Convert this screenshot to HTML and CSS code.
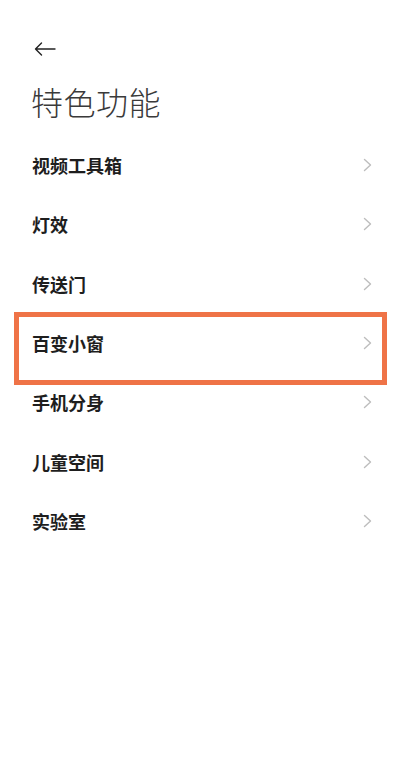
FILE: index.html
```html
<!DOCTYPE html>
<html lang="zh-CN">
<head>
<meta charset="utf-8">
<title>特色功能</title>
<link rel="stylesheet" href="styles.css">
</head>
<body>
<div class="page">
  <div class="topbar">
    <svg class="back" width="22" height="14" viewBox="0 0 22 14" fill="none" stroke="#222" stroke-width="1.4" stroke-linecap="round" stroke-linejoin="round">
      <path d="M21 7H1.5M7.5 1L1.5 7l6 6"/>
    </svg>
  </div>
  <h1 class="title">特色功能</h1>
  <ul class="list">
    <li class="item"><span class="label">视频工具箱</span><svg class="chev" width="9" height="14" viewBox="0 0 9 14" fill="none" stroke="#bdbdbd" stroke-width="1.4" stroke-linecap="round" stroke-linejoin="round"><path d="M1.5 1.5L7.5 7l-6 5.5"/></svg></li>
    <li class="item"><span class="label">灯效</span><svg class="chev" width="9" height="14" viewBox="0 0 9 14" fill="none" stroke="#bdbdbd" stroke-width="1.4" stroke-linecap="round" stroke-linejoin="round"><path d="M1.5 1.5L7.5 7l-6 5.5"/></svg></li>
    <li class="item"><span class="label">传送门</span><svg class="chev" width="9" height="14" viewBox="0 0 9 14" fill="none" stroke="#bdbdbd" stroke-width="1.4" stroke-linecap="round" stroke-linejoin="round"><path d="M1.5 1.5L7.5 7l-6 5.5"/></svg></li>
    <li class="item item-highlight"><span class="label">百变小窗</span><svg class="chev" width="9" height="14" viewBox="0 0 9 14" fill="none" stroke="#bdbdbd" stroke-width="1.4" stroke-linecap="round" stroke-linejoin="round"><path d="M1.5 1.5L7.5 7l-6 5.5"/></svg></li>
    <li class="item"><span class="label">手机分身</span><svg class="chev" width="9" height="14" viewBox="0 0 9 14" fill="none" stroke="#bdbdbd" stroke-width="1.4" stroke-linecap="round" stroke-linejoin="round"><path d="M1.5 1.5L7.5 7l-6 5.5"/></svg></li>
    <li class="item"><span class="label">儿童空间</span><svg class="chev" width="9" height="14" viewBox="0 0 9 14" fill="none" stroke="#bdbdbd" stroke-width="1.4" stroke-linecap="round" stroke-linejoin="round"><path d="M1.5 1.5L7.5 7l-6 5.5"/></svg></li>
    <li class="item"><span class="label">实验室</span><svg class="chev" width="9" height="14" viewBox="0 0 9 14" fill="none" stroke="#bdbdbd" stroke-width="1.4" stroke-linecap="round" stroke-linejoin="round"><path d="M1.5 1.5L7.5 7l-6 5.5"/></svg></li>
  </ul>
</div>
</body>
</html>
```

FILE: styles.css
```css
* { box-sizing: border-box; }
html, body {
  margin: 0;
  padding: 0;
  background: #fff;
}
body {
  font-family: "Noto Sans CJK SC", "Noto Sans", sans-serif;
  color: #1e1e1e;
}
.page {
  width: 403px;
  min-height: 763px;
}
.topbar {
  padding: 42px 0 0 34px;
  height: 56px;
}
.back { display: block; }
.title {
  margin: 23px 0 0 0;
  padding-left: 31px;
  font-size: 32px;
  line-height: 44px;
  font-weight: 300;
  color: #3a3a3a;
  letter-spacing: 0.5px;
}
.list {
  list-style: none;
  margin: 12.3px 0 0 0;
  padding: 0;
}
.item {
  position: relative;
  height: 59.35px;
  display: flex;
  align-items: center;
  justify-content: space-between;
  padding: 0 31px 0 32px;
}
.label {
  font-size: 18px;
  line-height: 24px;
  font-weight: 700;
  color: #1e1e1e;
}
.chev { display: block; }
.item-highlight::after {
  content: "";
  position: absolute;
  left: 14px;
  right: 16px;
  top: -1.5px;
  bottom: -12px;
  border: 5px solid #ef7347;
  pointer-events: none;
}
```
